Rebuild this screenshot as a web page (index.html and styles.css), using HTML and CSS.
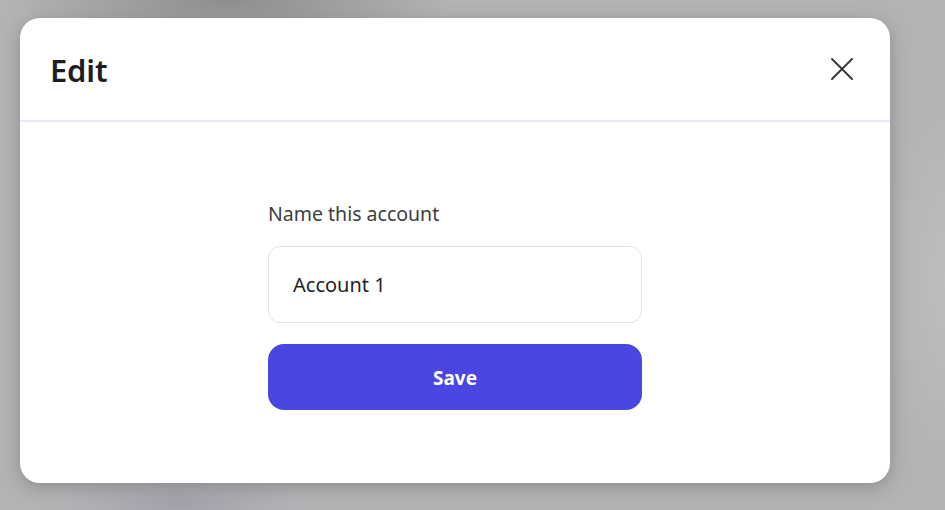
FILE: index.html
```html
<!DOCTYPE html>
<html>
<head>
<meta charset="utf-8">
<link rel="stylesheet" href="styles.css">
</head>
<body>
<div class="backdrop">
  <div class="modal">
    <div class="modal-header">
      <h1 class="title">Edit</h1>
      <button class="close" aria-label="Close">
        <svg width="24" height="24" viewBox="0 0 24 24" fill="none" stroke="#3a3a3d" stroke-width="2" stroke-linecap="round">
          <path d="M2 2 L22 22 M22 2 L2 22"/>
        </svg>
      </button>
    </div>
    <div class="modal-body">
      <form class="form">
        <label class="label">Name this account</label>
        <div class="input">Account 1</div>
        <button type="button" class="save">Save</button>
      </form>
    </div>
  </div>
</div>
</body>
</html>
```
FILE: styles.css
```css
html, body {
  margin: 0;
  height: 100%;
}
body {
  font-family: "Noto Sans", "Open Sans", sans-serif;
  background: #b4b4b7;
  overflow: hidden;
}
.backdrop {
  height: 510px;
  padding: 18px 0 0 20px;
  box-sizing: border-box;
  background:
    radial-gradient(ellipse 220px 40px at 230px 0px, rgba(110,110,112,0.55), rgba(110,110,112,0) 100%),
    radial-gradient(ellipse 120px 30px at 180px 505px, rgba(150,150,165,0.6), rgba(150,150,165,0) 100%),
    radial-gradient(ellipse 60px 200px at 945px 280px, rgba(200,200,202,0.5), rgba(200,200,202,0) 100%),
    #b3b3b6;
}
.modal {
  width: 870px;
  height: 465px;
  background: #fff;
  border-radius: 20px;
  box-shadow: 0 4px 18px rgba(0,0,0,0.22);
  display: flex;
  flex-direction: column;
}
.modal-header {
  height: 102px;
  border-bottom: 2px solid #e9e7f3;
  display: flex;
  align-items: center;
  justify-content: space-between;
  padding: 0 36px 0 30px;
}
.title {
  margin: 0;
  margin-top: 2px;
  font-size: 31px;
  font-weight: 600;
  color: #1d1d20;
  letter-spacing: -0.2px;
}
.close {
  border: 0;
  background: none;
  padding: 0;
  width: 24px;
  height: 24px;
  margin-top: -1px;
  display: flex;
}
.modal-body {
  flex: 1;
  display: flex;
  justify-content: center;
  padding-top: 78px;
}
.form {
  width: 374px;
  display: flex;
  flex-direction: column;
}
.label {
  font-size: 19.5px;
  line-height: 27px;
  color: #3d3d40;
  margin-bottom: 19px;
}
.input {
  height: 77px;
  box-sizing: border-box;
  border: 1px solid #e3e3e6;
  border-radius: 12px;
  padding: 0 24px;
  display: flex;
  align-items: center;
  font-size: 20px;
  color: #1f1f22;
  margin-bottom: 21px;
}
.save {
  height: 66px;
  border: 0;
  border-radius: 16px;
  background: #4a46e0;
  color: #fff;
  font-family: inherit;
  font-size: 19px;
  font-weight: 700;
  padding: 2px 0 0;
}
```
